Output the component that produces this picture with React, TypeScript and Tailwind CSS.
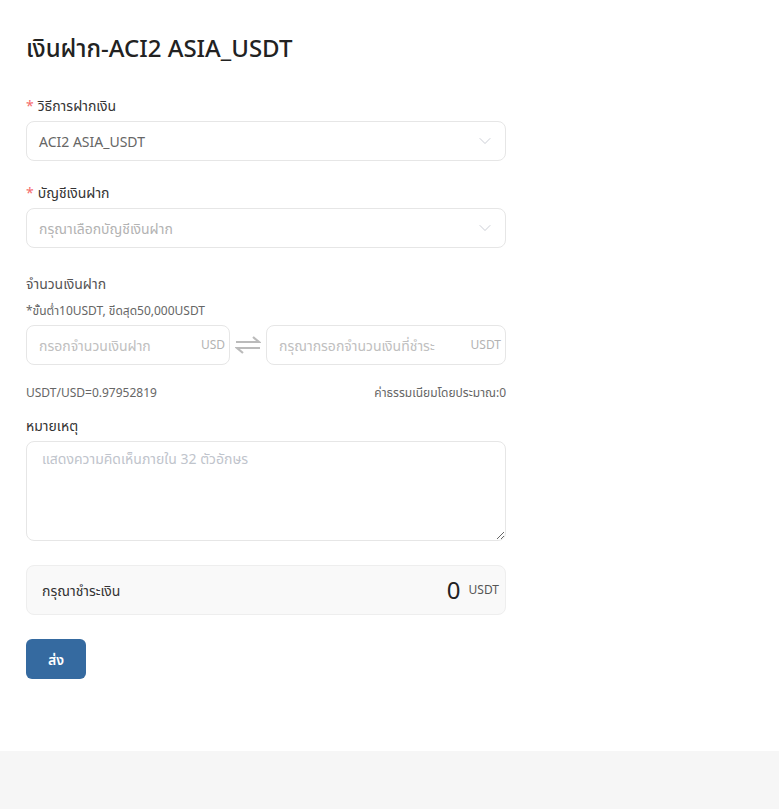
import { ChevronDown } from 'lucide-react'

const font = { fontFamily: '"Noto Sans", "Noto Sans Thai", "Liberation Sans", sans-serif' }

function Label({ text, required }: { text: string; required?: boolean }) {
  return (
    <div className="text-[14px] leading-[20px] text-[#333] mb-[5px]">
      {required && <span className="text-[#f56c6c] mr-[4px]">*</span>}
      {text}
    </div>
  )
}

function SelectBox({ value, placeholder }: { value?: string; placeholder: string }) {
  return (
    <div className="h-[40px] w-[480px] rounded-[8px] border border-[#e6e6e6] bg-white flex items-center justify-between pl-[12px] pr-[10px]">
      <span className={value ? 'text-[14px] text-[#666]' : 'text-[14px] text-[#b3b3b3]'}>{value ?? placeholder}</span>
      <ChevronDown size={20} strokeWidth={1} className="text-[#c0c4cc]" />
    </div>
  )
}

export default function App() {
  return (
    <div style={font} className="min-h-[809px] bg-[#f6f6f6]">
      <div className="bg-white h-[751px] px-[26px] pt-[32px]">
        <h1 className="text-[24px] leading-[32px] font-medium text-[#222] mb-[32px]">เงินฝาก-ACI2 ASIA_USDT</h1>

        <Label text="วิธีการฝากเงิน" required />
        <SelectBox value="ACI2 ASIA_USDT" placeholder="" />

        <div className="mt-[22px]">
          <Label text="บัญชีเงินฝาก" required />
          <SelectBox placeholder="กรุณาเลือกบัญชีเงินฝาก" />
        </div>

        <div className="mt-[26px] w-[480px]">
          <div className="text-[14px] leading-[20px] text-[#555]">จำนวนเงินฝาก</div>
          <div className="text-[12px] leading-[18px] text-[#666] mt-[8px] mb-[5px]">*ขั้นต่ำ10USDT, ขีดสุด50,000USDT</div>
          <div className="flex items-center">
            <div className="h-[40px] w-[204px] rounded-[8px] border border-[#e6e6e6] flex items-center justify-between pl-[12px] pr-[4px]">
              <span className="text-[14px] text-[#c0c0c0]">กรอกจำนวนเงินฝาก</span>
              <span className="text-[12px] text-[#b3b3b3]">USD</span>
            </div>
            <div className="w-[36px] flex justify-center">
              <svg width="26" height="20" viewBox="0 0 26 20" fill="none" stroke="#bbb" strokeWidth="2.2">
                <path d="M1 7h23l-6-5" />
                <path d="M25 13H2l6 5" />
              </svg>
            </div>
            <div className="h-[40px] flex-1 rounded-[8px] border border-[#e6e6e6] flex items-center justify-between pl-[12px] pr-[4px]">
              <span className="text-[14px] text-[#c0c0c0]">กรุณากรอกจำนวนเงินที่ชำระ</span>
              <span className="text-[12px] text-[#b3b3b3]">USDT</span>
            </div>
          </div>
          <div className="flex justify-between text-[12px] leading-[18px] text-[#666] mt-[19px]">
            <span>USDT/USD=0.97952819</span>
            <span>ค่าธรรมเนียมโดยประมาณ:0</span>
          </div>
        </div>

        <div className="mt-[14px]">
          <Label text="หมายเหตุ" />
          <textarea
            placeholder="แสดงความคิดเห็นภายใน 32 ตัวอักษร"
            className="block h-[100px] w-[480px] rounded-[8px] border border-[#e6e6e6] px-[15px] py-[6px] text-[14px] placeholder:text-[#c0c4cc] outline-none"
          />
        </div>

        <div className="mt-[24px] h-[50px] w-[480px] rounded-[8px] border border-[#eee] bg-[#f9f9f9] flex items-center justify-between pl-[15px] pr-[6px]">
          <span className="text-[14px] text-[#333]">กรุณาชำระเงิน</span>
          <div className="flex items-center gap-[8px]">
            <span className="text-[24px] text-[#222]">0</span>
            <span className="text-[12px] text-[#555]">USDT</span>
          </div>
        </div>

        <button className="mt-[24px] h-[40px] w-[60px] rounded-[6px] bg-[#356aa0] text-white text-[14px] font-semibold">ส่ง</button>
      </div>
    </div>
  )
}
